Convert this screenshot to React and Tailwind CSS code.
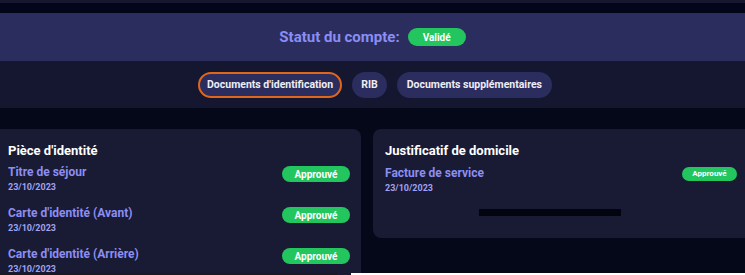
import React from "react";

const identityDocs = [
  { name: "Titre de séjour", date: "23/10/2023" },
  { name: "Carte d'identité (Avant)", date: "23/10/2023" },
  { name: "Carte d'identité (Arrière)", date: "23/10/2023" },
];

function Badge({ label, small }) {
  return (
    <span
      className={`bg-[#22c55e] text-white font-bold rounded-full flex items-center justify-center ${
        small ? "w-[55px] h-[14px] text-[8px]" : "w-[68px] h-[16px] text-[10px]"
      }`}
    >
      {label}
    </span>
  );
}

function DocRow({ name, date, small }) {
  return (
    <div className="flex items-start justify-between">
      <div className="flex flex-col">
        <span className="text-[12px] font-bold text-[#8c8ef2] leading-[14px]">{name}</span>
        <span className="text-[9px] font-bold text-[#9fa2f2] leading-[12px] mt-[2px]">{date}</span>
      </div>
      <div className="pt-[1px]">
        <Badge label="Approuvé" small={small} />
      </div>
    </div>
  );
}

export default function App() {
  return (
    <div className="relative w-[745px] h-[275px] overflow-hidden bg-[#050818] font-['Roboto',sans-serif]">
      <div className="h-[3px] bg-[#17182f]" />
      <div className="h-[10px] bg-[#03061a]" />

      <div className="h-[48px] bg-[#2b2d5e] flex items-center justify-center gap-[8px]">
        <span className="text-[15px] font-bold text-[#8a8df5]">Statut du compte:</span>
        <span className="w-[58px] h-[18px] rounded-full bg-[#22c55e] text-white text-[10px] font-bold flex items-center justify-center">
          Validé
        </span>
      </div>

      <div className="h-[47px] bg-[#15162f] flex items-center justify-center gap-[10px] pl-[5px]">
        <button className="h-[26px] px-[7px] rounded-full bg-[#2b2d5e] border-2 border-[#e0661a] text-[10.5px] font-bold text-[#eeeef6]">
          Documents d'identification
        </button>
        <button className="h-[26px] px-[9px] rounded-full bg-[#2b2d5e] text-[10.5px] font-bold text-[#eeeef6]">
          RIB
        </button>
        <button className="h-[26px] px-[10px] rounded-full bg-[#2b2d5e] text-[10.5px] font-bold text-[#eeeef6]">
          Documents supplémentaires
        </button>
      </div>

      <div className="flex gap-[12px] pt-[21px]">
        <div className="w-[361px] h-[160px] bg-[#191a33] rounded-tr-[8px] pl-[8px] pr-[11px] pt-[14px]">
          <h2 className="text-[13px] font-bold text-white leading-[16px] mb-[6px]">Pièce d'identité</h2>
          <div className="flex flex-col gap-[13px]">
            {identityDocs.map((d) => (
              <DocRow key={d.name} name={d.name} date={d.date} />
            ))}
          </div>
        </div>

        <div className="flex-1 h-[109px] bg-[#191a33] rounded-l-[8px] pl-[12px] pr-[8px] pt-[14px] flex flex-col">
          <h2 className="text-[13px] font-bold text-white leading-[16px] mb-[7px]">Justificatif de domicile</h2>
          <DocRow name="Facture de service" date="23/10/2023" small />
          <div className="mt-[15px] ml-[94px] w-[142px] h-[7px] bg-[#03040f]" />
        </div>
      </div>

      <div className="absolute left-0 right-0 bottom-0 h-[2px] flex">
        <div className="w-[337px] bg-[#1a1a1a]" />
        <div className="w-[14px]" />
        <div className="flex-1 bg-white" />
      </div>
    </div>
  );
}
